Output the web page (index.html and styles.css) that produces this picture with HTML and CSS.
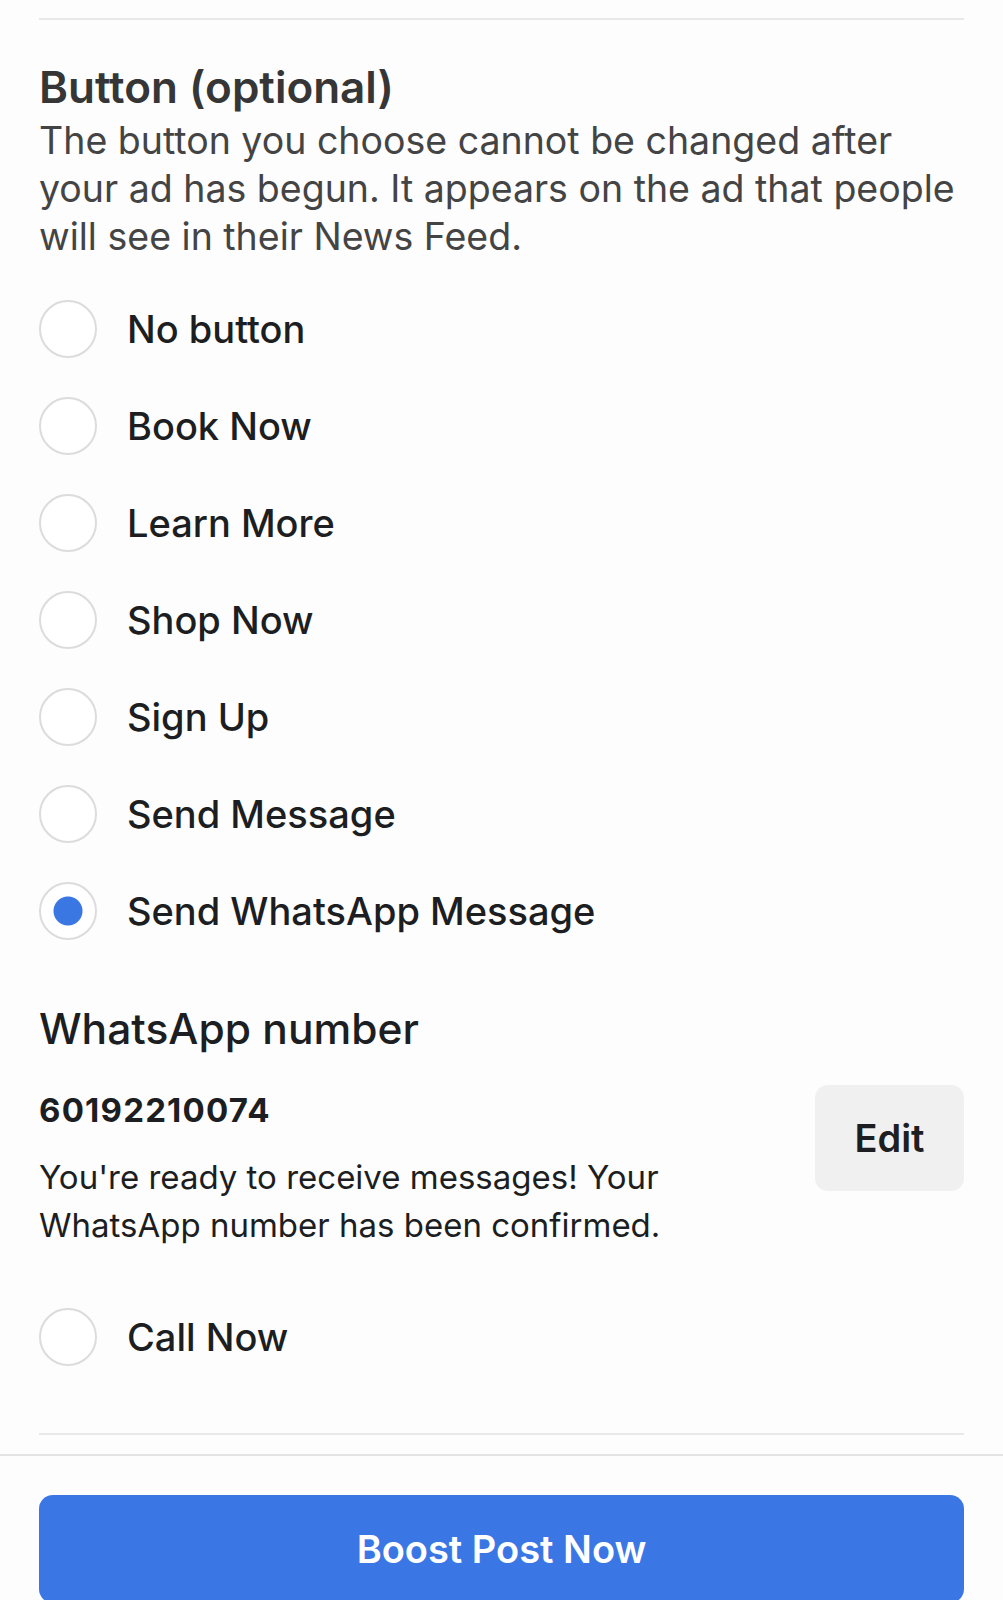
FILE: index.html
```html
<!DOCTYPE html>
<html lang="en">
<head>
  <meta charset="UTF-8" />
  <meta name="viewport" content="width=device-width, initial-scale=1.0"/>
  <title>Boost Post - Button</title>
  <link rel="stylesheet" href="styles.css">
</head>
<body>
  <div class="page">
    <hr class="divider" />

    <h2 class="title">Button (optional)</h2>
    <p class="desc">The button you choose cannot be changed after your ad has begun. It appears on the ad that people will see in their News Feed.</p>

    <form class="options" onsubmit="event.preventDefault();">
      <label class="option"><input type="radio" name="cta" /><span>No button</span></label>
      <label class="option"><input type="radio" name="cta" /><span>Book Now</span></label>
      <label class="option"><input type="radio" name="cta" /><span>Learn More</span></label>
      <label class="option"><input type="radio" name="cta" /><span>Shop Now</span></label>
      <label class="option"><input type="radio" name="cta" /><span>Sign Up</span></label>
      <label class="option"><input type="radio" name="cta" /><span>Send Message</span></label>
      <label class="option"><input type="radio" name="cta" checked /><span>Send WhatsApp Message</span></label>

      <div class="whatsapp">
        <h3>WhatsApp number</h3>
        <div class="number-row">
          <div class="number-info">
            <div class="number">60192210074</div>
            <p class="confirm">You're ready to receive messages! Your WhatsApp number has been confirmed.</p>
          </div>
          <button type="button" class="edit">Edit</button>
        </div>
      </div>

      <label class="option last"><input type="radio" name="cta" /><span>Call Now</span></label>
    </form>

    <hr class="divider" />
  </div>

  <div class="footer">
    <button type="button" class="boost">Boost Post Now</button>
  </div>
</body>
</html>
```

FILE: styles.css
```css
body {
  margin: 0;
  font-family: Inter, "Open Sans", sans-serif;
  background: #fdfdfd;
  color: #1c1e21;
}
.page {
  padding: 18px 39px 0;
}
.divider {
  border: 0;
  height: 2px;
  background: #e8e8e8;
  margin: 0;
}
.title {
  margin: 43px 0 0;
  font-size: 44px;
  line-height: 48px;
  font-weight: 600;
  color: #363636;
}
.desc {
  margin: 6px 0 0;
  font-size: 37.5px;
  line-height: 48px;
  color: #444;
}
.options {
  margin-top: 19px;
}
.option {
  display: flex;
  align-items: center;
  height: 97px;
  cursor: pointer;
}
.option input {
  appearance: none;
  -webkit-appearance: none;
  margin: 0 30px 0 0;
  width: 58px;
  height: 58px;
  border: 2px solid #dcdcdc;
  border-radius: 50%;
  background: #fff;
  flex-shrink: 0;
}
.option input:checked {
  background: radial-gradient(circle, #3a77e3 0 14px, #fff 15px);
}
.option span {
  font-size: 38px;
  font-weight: 500;
  color: #1c1e21;
}
.whatsapp {
  margin-top: 48px;
}
.whatsapp h3 {
  margin: 0;
  font-size: 42.5px;
  line-height: 44px;
  font-weight: 500;
}
.number-row {
  display: flex;
  justify-content: space-between;
  align-items: flex-start;
  margin-top: 34px;
}
.number {
  margin-top: 7px;
  font-size: 33px;
  line-height: 36px;
  font-weight: 700;
  letter-spacing: 1.2px;
}
.confirm {
  margin: 25px 0 0;
  font-size: 33px;
  line-height: 48px;
  max-width: 660px;
}
.edit {
  width: 149px;
  height: 106px;
  border: 0;
  border-radius: 13px;
  background: #f0f0f0;
  font-family: inherit;
  font-size: 38px;
  font-weight: 600;
  color: #1c1e21;
  cursor: pointer;
}
.option.last {
  margin-top: 39px;
}
.page > .divider:last-child {
  margin-top: 48px;
}
.footer {
  border-top: 2px solid #e4e4e4;
  margin-top: 19px;
  padding: 39px 39px 0;
}
.boost {
  width: 100%;
  height: 108px;
  border: 0;
  border-radius: 14px;
  background: #3a77e5;
  color: #fff;
  font-family: inherit;
  font-size: 38px;
  font-weight: 600;
  cursor: pointer;
}
```
